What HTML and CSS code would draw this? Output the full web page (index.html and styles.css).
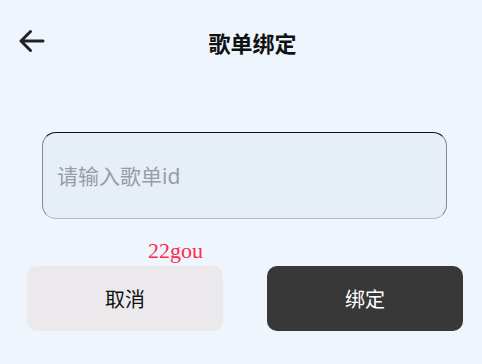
FILE: index.html
```html
<!DOCTYPE html>
<html lang="zh">
<head>
    <meta charset="UTF-8">
    <meta name="viewport" content="width=device-width, initial-scale=1.0">
    <title>歌单绑定</title>
    <link rel="stylesheet" href="styles.css">
</head>
<body>
    <div class="header">
        <div class="back">
            <svg width="28" height="26" viewBox="0 0 28 26">
                <path d="M26 12 H4 M13.5 2.5 L4 12 L13.5 21.5" fill="none" stroke="#222" stroke-width="3" stroke-linecap="round" stroke-linejoin="round"/>
            </svg>
        </div>
        <div class="title">歌单绑定</div>
    </div>
    <div class="input-box">
        <input id="playlist-id" type="text" placeholder="请输入歌单id">
    </div>
    <div class="tag">22gou</div>
    <div class="actions">
        <button class="btn cancel">取消</button>
        <button class="btn confirm">绑定</button>
    </div>
</body>
</html>
```

FILE: styles.css
```css
body {
    margin: 0;
    background-color: #eef5fd;
    font-family: 'Noto Sans', 'Noto Sans CJK SC', sans-serif;
    color: #111;
}
.header {
    height: 84px;
    display: flex;
    align-items: center;
    padding: 0 22px 0 17px;
}
.back {
    width: 28px;
    height: 26px;
    display: flex;
}
.title {
    flex: 1;
    text-align: center;
    font-size: 22px;
    font-weight: bold;
    color: #111;
}
.input-box {
    margin: 48px 35px 0 42px;
    height: 85px;
    border: 1px solid #888;
    border-top-color: #111;
    border-bottom-color: #b8bcc4;
    border-radius: 14px;
    background-color: #e6eef8;
    display: flex;
    align-items: center;
    padding: 0 14px;
}
.input-box input {
    flex: 1;
    border: none;
    outline: none;
    background: transparent;
    font-family: 'Noto Sans', 'Noto Sans CJK SC', sans-serif;
    font-size: 21px;
    color: #333;
    padding: 0;
}
.input-box input::placeholder {
    color: #9a9ca2;
}
.tag {
    margin: 21px 0 0 148px;
    font-family: 'Liberation Serif', serif;
    font-size: 22px;
    line-height: 22px;
    color: #ff2a4a;
}
.actions {
    display: flex;
    gap: 44px;
    margin: 4px 0 0 27px;
}
.btn {
    width: 196px;
    height: 65px;
    border: none;
    border-radius: 10px;
    font-family: 'Noto Sans CJK SC', sans-serif;
    font-size: 20px;
    cursor: pointer;
}
.cancel {
    background-color: #ebe9eb;
    color: #111;
}
.confirm {
    background-color: #383838;
    color: #fff;
}
```
